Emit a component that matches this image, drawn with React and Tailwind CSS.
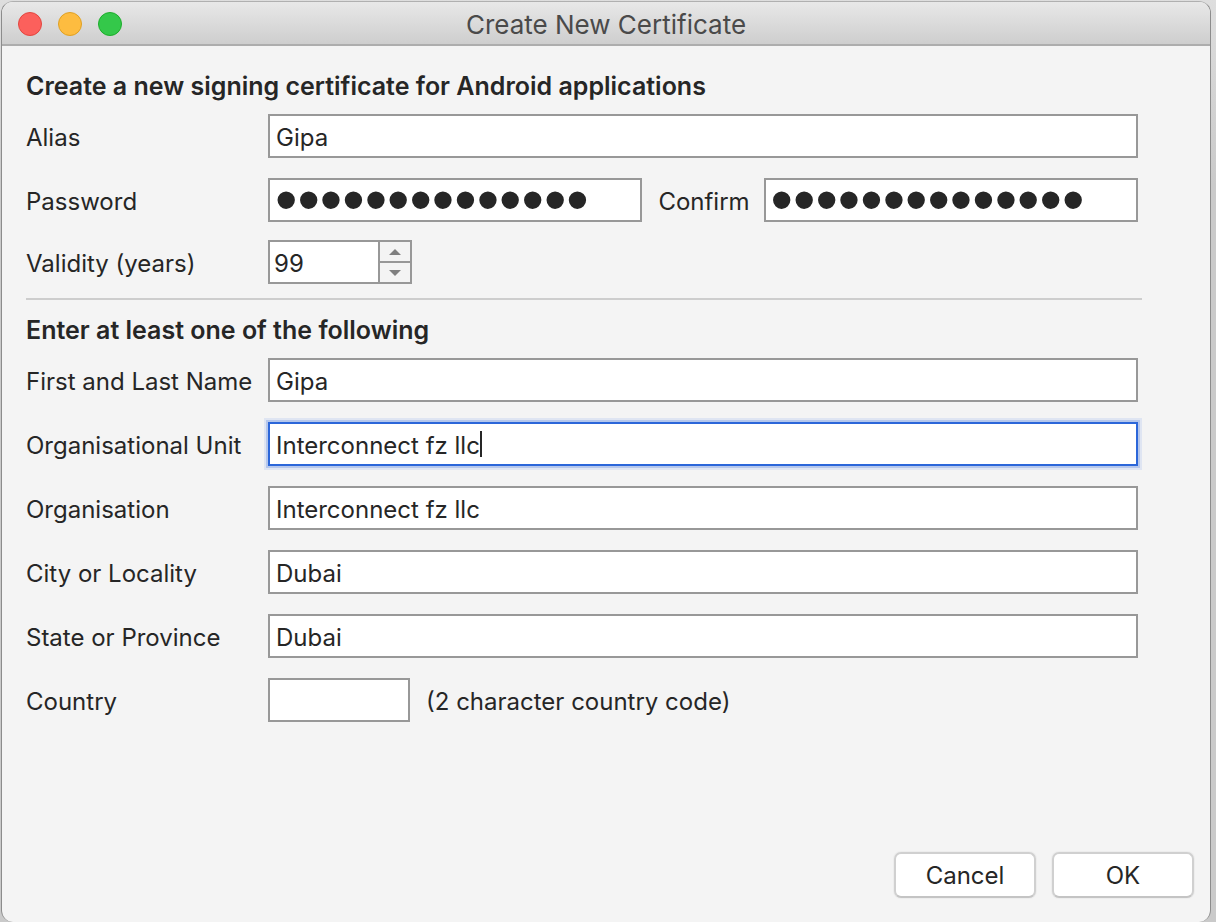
import React from "react";

const fieldClass =
  "h-11 w-full min-w-0 border-2 border-[#989898] bg-white px-[6px] pt-[2px] text-[24px] leading-[30px] text-[#262626] outline-none";

const passwordClass =
  "h-11 w-full min-w-0 border-2 border-[#989898] bg-white px-[5px] font-['Liberation_Sans',sans-serif] text-[64px] leading-[40px] text-[#262626] outline-none";

const buttonClass =
  "h-[46px] w-[142px] rounded-[7px] border-2 border-[#d0d0d0] border-b-[#c4c4c4] bg-white pt-px shadow-[0_0_0_1px_#ededed]";

function Row({ id, label, children }) {
  return (
    <div className="flex items-center">
      <label htmlFor={id} className="w-[242px] shrink-0 whitespace-nowrap pt-[3px]">
        {label}
      </label>
      <div className="flex min-w-0 flex-1 items-center">{children}</div>
    </div>
  );
}

function TextRow({ id, label, value }) {
  return (
    <Row id={id} label={label}>
      <input id={id} type="text" defaultValue={value} className={fieldClass} />
    </Row>
  );
}

function TitleBar() {
  return (
    <header className="grid h-11 grid-cols-[1fr_auto_1fr] items-center border-b-2 border-[#adadad] bg-linear-to-b from-[#e8e8e8] to-[#cecece] px-4 pt-[2px]">
      <div className="flex gap-4">
        <button type="button" aria-label="Close" className="size-6 rounded-full border border-[#e2463f] bg-[#fc605c]" />
        <button type="button" aria-label="Minimise" className="size-6 rounded-full border border-[#dfa023] bg-[#fdbc40]" />
        <button type="button" aria-label="Zoom" className="size-6 rounded-full border border-[#1dad2b] bg-[#34c84a]" />
      </div>
      <h1 className="pt-[2px] text-[26px] leading-8 text-[#4a4a4a]">Create New Certificate</h1>
    </header>
  );
}

export default function App() {
  return (
    <div className="flex min-h-screen bg-linear-to-b from-[#dedede] to-[#cacaca] to-20% pl-px pr-[5px] pt-px font-['Inter',sans-serif] text-[24px] leading-[30px] text-[#262626]">
      <main className="flex flex-1 flex-col overflow-hidden rounded-[12px] border border-b-0 border-x-[#8c8c8c] border-t-[#b0b0b0] bg-[#f4f4f4]">
        <TitleBar />
        <form className="flex flex-1 flex-col" onSubmit={(e) => e.preventDefault()}>
          <div className="flex flex-col pl-6 pr-[72px] pt-[25px]">
            <h2 className="pb-[13px] text-[25px] font-semibold">Create a new signing certificate for Android applications</h2>
            <div className="flex flex-col gap-5">
              <TextRow id="alias" label="Alias" value="Gipa" />
              <Row id="password" label="Password">
                <input id="password" type="password" defaultValue="certificate123" className={passwordClass} />
                <label htmlFor="confirm" className="shrink-0 pl-4 pr-[14px] pt-[3px]">
                  Confirm
                </label>
                <input id="confirm" type="password" defaultValue="certificate123" className={passwordClass} />
              </Row>
            </div>
            <div className="pt-[18px]">
              <Row id="validity" label="Validity (years)">
                <input
                  id="validity"
                  type="text"
                  inputMode="numeric"
                  defaultValue="99"
                  className="h-11 w-[110px] border-2 border-r-0 border-[#989898] bg-white px-1 pt-[2px] text-[24px] leading-[30px] outline-none"
                />
                <div className="flex h-11 w-[34px] flex-col divide-y-2 divide-[#989898] border-2 border-[#989898] bg-[#f4f4f4]">
                  <button type="button" aria-label="Increase years" className="flex flex-1 items-center justify-center">
                    <svg width="12" height="6" viewBox="0 0 12 6" fill="#808080"><path d="M6 0 12 6H0Z" /></svg>
                  </button>
                  <button type="button" aria-label="Decrease years" className="flex flex-1 items-center justify-center">
                    <svg width="12" height="6" viewBox="0 0 12 6" fill="#808080"><path d="M0 0H12L6 6Z" /></svg>
                  </button>
                </div>
              </Row>
            </div>
            <hr className="-mr-1 mt-[14px] border-t-2 border-[#cdcdcd]" />
            <h2 className="pb-[13px] pt-[15px] text-[25px] font-semibold">Enter at least one of the following</h2>
            <div className="flex flex-col gap-5">
              <TextRow id="name" label="First and Last Name" value="Gipa" />
              <Row id="unit" label="Organisational Unit">
                <div className="relative w-full">
                  <input
                    id="unit"
                    type="text"
                    defaultValue="Interconnect fz llc"
                    className="block h-11 w-full border-2 border-[#2b66d9] bg-white px-[6px] pt-[2px] text-[24px] leading-[30px] shadow-[0_0_0_2px_#b5c7ec,0_0_0_4px_#dfe5f2] outline-none"
                  />
                  <span aria-hidden="true" className="absolute left-[212px] top-[9px] h-[26px] w-[2px] bg-[#262626]" />
                </div>
              </Row>
              <TextRow id="organisation" label="Organisation" value="Interconnect fz llc" />
              <TextRow id="city" label="City or Locality" value="Dubai" />
              <TextRow id="state" label="State or Province" value="Dubai" />
              <Row id="country" label="Country">
                <input
                  id="country"
                  type="text"
                  maxLength={2}
                  className="h-11 w-[142px] border-2 border-[#989898] bg-white px-[6px] text-[24px] outline-none"
                />
                <span className="pl-4 pt-[3px]">(2 character country code)</span>
              </Row>
            </div>
          </div>
          <div className="mt-auto flex justify-end gap-4 px-4 pb-6">
            <button type="button" className={buttonClass}>
              Cancel
            </button>
            <button type="submit" className={buttonClass}>
              OK
            </button>
          </div>
        </form>
      </main>
    </div>
  );
}
